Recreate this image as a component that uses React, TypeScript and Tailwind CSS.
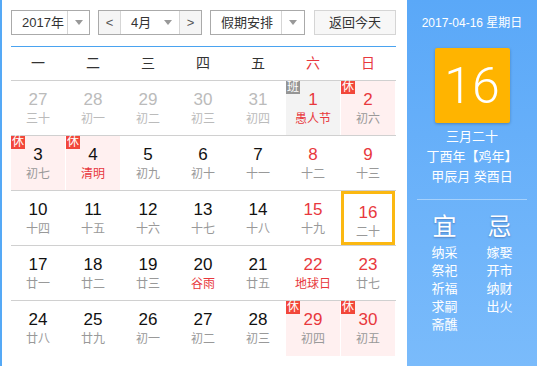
import React from "react";

type Day = {
  n: number;
  l: string;
  prev?: boolean;
  red?: boolean;
  fest?: boolean;
  tag?: "休" | "班";
  today?: boolean;
};

const rows: Day[][] = [
  [
    { n: 27, l: "三十", prev: true },
    { n: 28, l: "初一", prev: true },
    { n: 29, l: "初二", prev: true },
    { n: 30, l: "初三", prev: true },
    { n: 31, l: "初四", prev: true },
    { n: 1, l: "愚人节", red: true, fest: true, tag: "班" },
    { n: 2, l: "初六", red: true, tag: "休" },
  ],
  [
    { n: 3, l: "初七", tag: "休" },
    { n: 4, l: "清明", fest: true, tag: "休" },
    { n: 5, l: "初九" },
    { n: 6, l: "初十" },
    { n: 7, l: "十一" },
    { n: 8, l: "十二", red: true },
    { n: 9, l: "十三", red: true },
  ],
  [
    { n: 10, l: "十四" },
    { n: 11, l: "十五" },
    { n: 12, l: "十六" },
    { n: 13, l: "十七" },
    { n: 14, l: "十八" },
    { n: 15, l: "十九", red: true },
    { n: 16, l: "二十", red: true, today: true },
  ],
  [
    { n: 17, l: "廿一" },
    { n: 18, l: "廿二" },
    { n: 19, l: "廿三" },
    { n: 20, l: "谷雨", fest: true },
    { n: 21, l: "廿五" },
    { n: 22, l: "地球日", red: true, fest: true },
    { n: 23, l: "廿七", red: true },
  ],
  [
    { n: 24, l: "廿八" },
    { n: 25, l: "廿九" },
    { n: 26, l: "初一" },
    { n: 27, l: "初二" },
    { n: 28, l: "初三" },
    { n: 29, l: "初四", red: true, tag: "休" },
    { n: 30, l: "初五", red: true, tag: "休" },
  ],
];

const weekdays = ["一", "二", "三", "四", "五", "六", "日"];

function Tri() {
  return (
    <span className="block w-0 h-0 border-x-[4px] border-x-transparent border-t-[5px] border-t-[#999]" />
  );
}

function Cell({ d }: { d: Day }) {
  const bg = d.tag === "休" ? "bg-[#fff0f0]" : d.tag === "班" ? "bg-[#f3f3f3]" : "";
  const numColor = d.prev ? "text-[#bbb]" : d.red ? "text-[#e8383d]" : "text-[#111]";
  const lunarColor = d.prev ? "text-[#bbb]" : d.fest ? "text-[#e8383d]" : "text-[#999]";
  return (
    <div className="w-[55px] h-full pr-px">
      <div
        className={`relative h-full w-full flex flex-col items-center pt-[10px] ${bg} ${
          d.today ? "border-[3px] border-[#fbb811] pt-[7px]" : ""
        }`}
      >
        {d.tag && (
          <span
            className={`absolute left-0 top-0 w-[14px] h-[13px] text-[12px] leading-[13px] text-white text-center ${
              d.tag === "休" ? "bg-[#f2473a]" : "bg-[#959595]"
            } ${d.today ? "" : ""}`}
          >
            {d.tag}
          </span>
        )}
        <span className={`text-[17px] leading-[18px] ${numColor}`}>{d.n}</span>
        <span className={`mt-[2px] text-[12px] leading-[16px] ${lunarColor}`}>{d.l}</span>
      </div>
    </div>
  );
}

export default function App() {
  return (
    <div
      className="flex w-[537px] h-[366px] bg-white overflow-hidden"
      style={{ fontFamily: '"Liberation Sans", "Noto Sans CJK SC", sans-serif' }}
    >
      <div className="w-[407px] h-full border-l-2 border-[#55a9f6] pl-[9px] pr-[11px] pt-[10px]">
        {/* controls */}
        <div className="flex h-[25px] text-[13px] text-[#333]">
          <div className="flex w-[79px] h-full border border-[#aaa] bg-white">
            <div className="w-[55px] flex items-center pl-[10px]">2017年</div>
            <div className="flex-1 flex items-center justify-center border-l border-[#d5d5d5]">
              <Tri />
            </div>
          </div>
          <div className="ml-[8px] flex w-[104px] h-full border border-[#aaa] bg-white">
            <div className="w-[21px] flex items-center justify-center bg-[#f5f5f5] text-[#555]">&lt;</div>
            <div className="w-[60px] flex items-center justify-between pl-[10px] pr-[7px] border-x border-[#d5d5d5]">
              <span>4月</span>
              <Tri />
            </div>
            <div className="flex-1 flex items-center justify-center bg-[#f5f5f5] text-[#555]">&gt;</div>
          </div>
          <div className="ml-[8px] flex w-[95px] h-full border border-[#aaa] bg-white">
            <div className="w-[70px] flex items-center pl-[10px]">假期安排</div>
            <div className="flex-1 flex items-center justify-center border-l border-[#d5d5d5]">
              <Tri />
            </div>
          </div>
          <div className="ml-[9px] w-[82px] h-full border border-[#d5d5d5] bg-[#f7f7f7] flex items-center justify-center">
            返回今天
          </div>
        </div>

        {/* header */}
        <div className="mt-[11px] border-t border-[#4aa3f0]">
          <div className="grid grid-cols-7 h-[34px] border-b border-[#d0d0d0] text-[14px]">
            {weekdays.map((w, i) => (
              <div
                key={w}
                className={`flex items-center justify-center pr-px ${i >= 5 ? "text-[#e8383d]" : "text-[#333]"}`}
              >
                {w}
              </div>
            ))}
          </div>
          {rows.map((r, ri) => (
            <div
              key={ri}
              className={`flex h-[55px] ${ri < rows.length - 1 ? "border-b border-[#d0d0d0]" : ""}`}
            >
              {r.map((d, di) => (
                <Cell key={di} d={d} />
              ))}
            </div>
          ))}
        </div>
      </div>

      {/* right panel */}
      <div className="w-[130px] h-full bg-gradient-to-b from-[#5aa8f8] to-[#7abbfb] text-white flex flex-col items-center pt-[15px]">
        <div className="text-[12px] leading-[16px]">2017-04-16 星期日</div>
        <div className="mt-[17px] w-[75px] h-[75px] bg-[#ffb400] rounded-[2px] shadow-[0_1px_3px_rgba(0,0,0,0.25)] flex items-center justify-center">
          <span className="text-[50px] leading-none font-light" style={{ fontFamily: 'Roboto, "Liberation Sans", sans-serif', fontWeight: 300 }}>
            16
          </span>
        </div>
        <div className="mt-[4px] text-[13px] leading-[20px]">三月二十</div>
        <div className="text-[13px] leading-[20px]">丁酉年【鸡年】</div>
        <div className="text-[13px] leading-[20px]">甲辰月 癸酉日</div>
        <div className="mt-[12px] w-[110px] h-px bg-white/40" />
        <div className="mt-[13px] flex">
          <div className="w-[55px] flex flex-col items-center">
            <div className="text-[24px] leading-[28px] [text-shadow:0_1px_2px_rgba(0,0,60,0.3)]">宜</div>
            <div className="mt-[3px] text-[13px] leading-[18px] flex flex-col">
              <span>纳采</span>
              <span>祭祀</span>
              <span>祈福</span>
              <span>求嗣</span>
              <span>斋醮</span>
            </div>
          </div>
          <div className="w-[55px] flex flex-col items-center">
            <div className="text-[24px] leading-[28px] [text-shadow:0_1px_2px_rgba(0,0,60,0.3)]">忌</div>
            <div className="mt-[3px] text-[13px] leading-[18px] flex flex-col">
              <span>嫁娶</span>
              <span>开市</span>
              <span>纳财</span>
              <span>出火</span>
            </div>
          </div>
        </div>
      </div>
    </div>
  );
}
